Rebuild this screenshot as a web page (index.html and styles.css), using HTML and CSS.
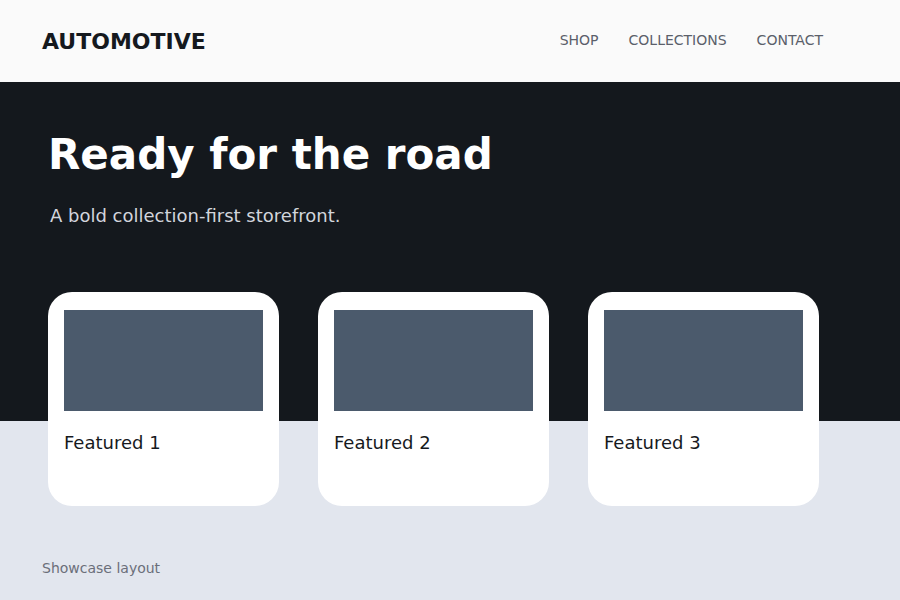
FILE: index.html
```html
<!DOCTYPE html>
<html lang="en">
<head>
<meta charset="utf-8">
<title>Automotive</title>
<link rel="stylesheet" href="styles.css">
</head>
<body>
<header class="site-header">
  <div class="logo">AUTOMOTIVE</div>
  <nav class="nav">
    <a href="#">SHOP</a>
    <a href="#">COLLECTIONS</a>
    <a href="#">CONTACT</a>
  </nav>
</header>
<section class="hero">
  <h1 class="hero-title">Ready for the road</h1>
  <p class="hero-sub">A bold collection-first storefront.</p>
</section>
<section class="cards">
  <div class="card"><div class="card-img"></div><div class="card-title">Featured 1</div></div>
  <div class="card"><div class="card-img"></div><div class="card-title">Featured 2</div></div>
  <div class="card"><div class="card-img"></div><div class="card-title">Featured 3</div></div>
</section>
<footer class="footer">Showcase layout</footer>
</body>
</html>
```
FILE: styles.css
```css
* { box-sizing: border-box; }
html, body { margin: 0; padding: 0; }
body {
  background: #e2e6ee;
  font-family: "DejaVu Sans", sans-serif;
  width: 900px;
  height: 600px;
  overflow: hidden;
}
.site-header {
  height: 82px;
  background: #fafafa;
  display: flex;
  align-items: center;
  justify-content: space-between;
  padding: 0 77px 0 42px;
}
.logo {
  font-size: 22px;
  font-weight: bold;
  color: #15191e;
}
.nav {
  display: flex;
  gap: 30px;
  padding-bottom: 3px;
}
.nav a {
  font-size: 14px;
  color: #5b5f6a;
  text-decoration: none;
}
.hero {
  background: #14181d;
  height: 339px;
  padding: 44px 48px 0;
}
.hero-title {
  margin: 0;
  font-size: 42px;
  font-weight: bold;
  color: #ffffff;
  line-height: 58px;
}
.hero-sub {
  margin: 20px 0 0 2px;
  font-size: 18px;
  color: #d2d5dc;
  line-height: 24px;
}
.cards {
  display: flex;
  gap: 39px;
  padding: 0 48px;
  margin-top: -129px;
}
.card {
  width: 231px;
  height: 214px;
  background: #ffffff;
  border-radius: 24px;
  padding: 18px 16px 16px;
}
.card-img {
  height: 101px;
  background: #4b5a6c;
}
.card-title {
  margin-top: 20px;
  font-size: 18px;
  color: #16191d;
  line-height: 24px;
}
.footer {
  padding: 54px 42px 0;
  font-size: 14px;
  color: #6b6f7a;
}
```
